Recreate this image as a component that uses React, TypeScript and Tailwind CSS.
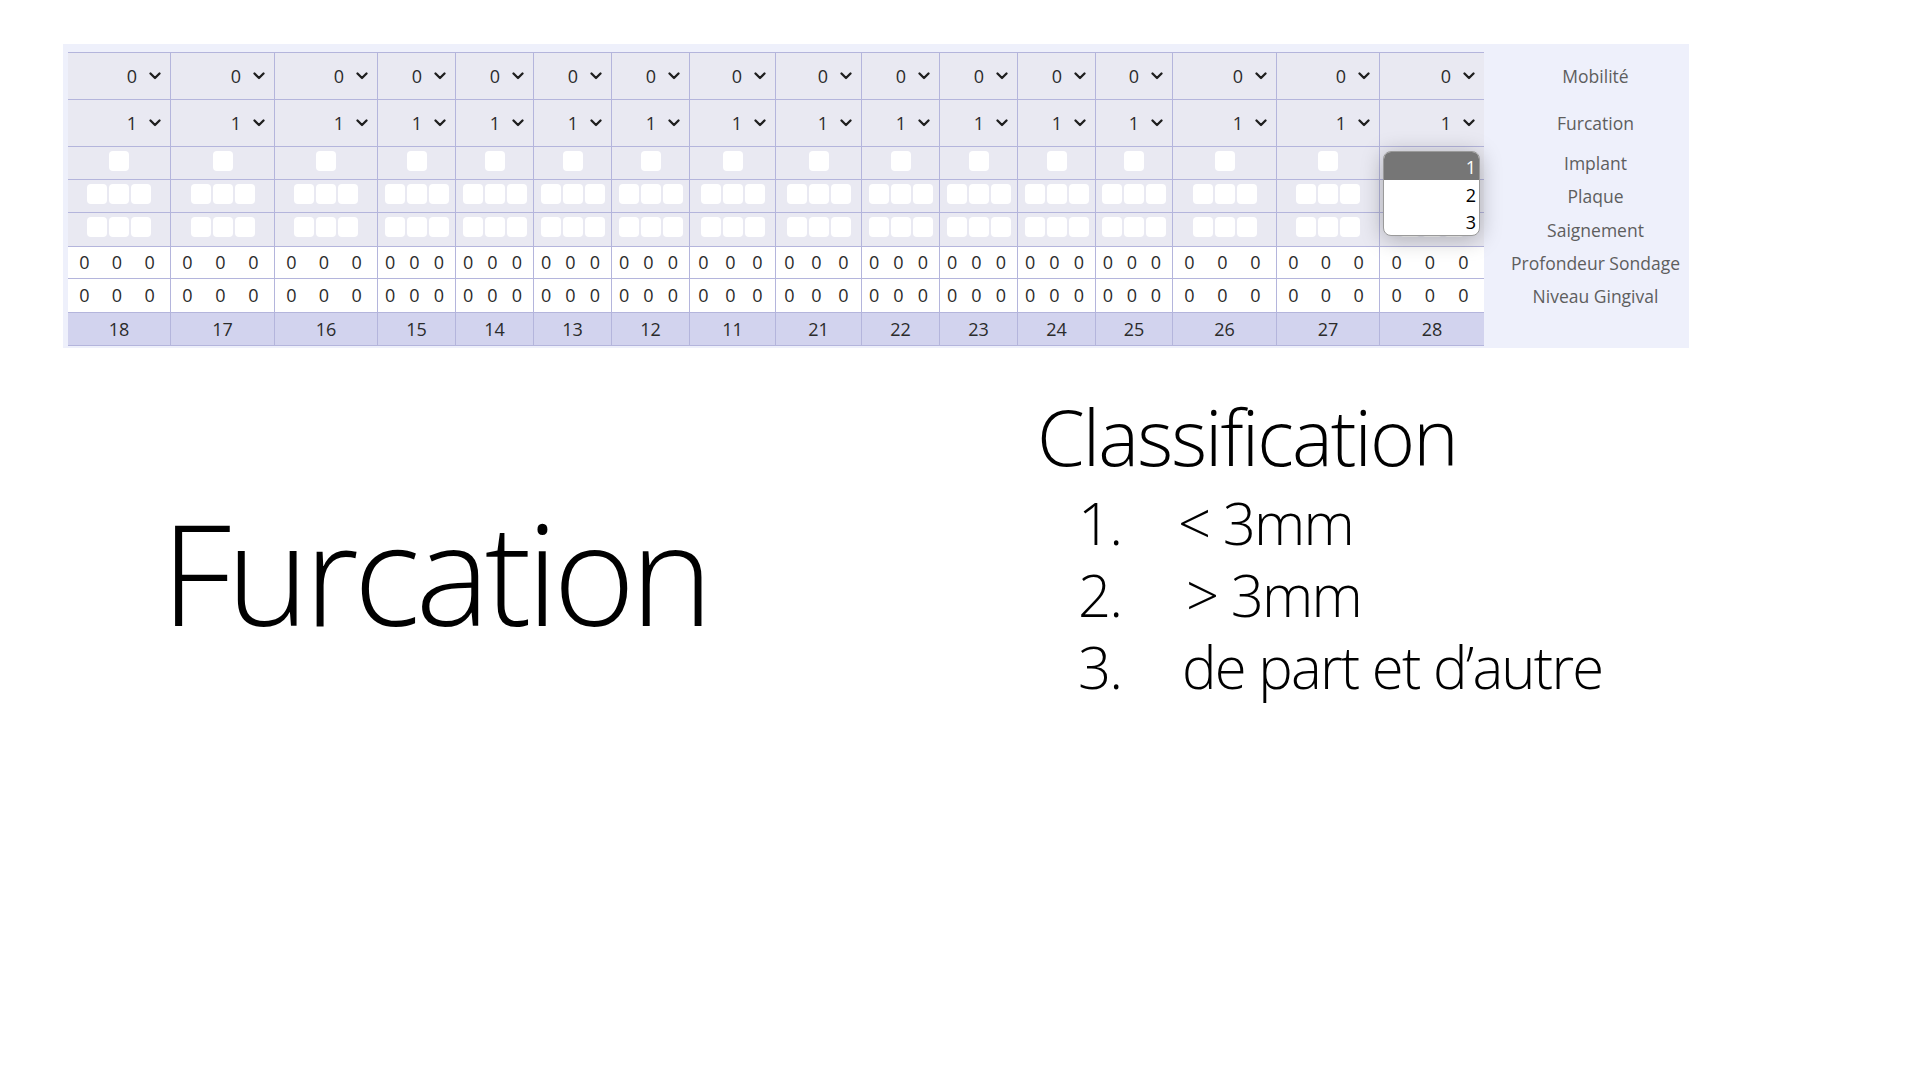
const teeth = [18, 17, 16, 15, 14, 13, 12, 11, 21, 22, 23, 24, 25, 26, 27, 28];
const grid =
  "grid grid-cols-[103px_104px_103px_78px_78px_78px_78px_86px_86px_78px_78px_78px_77px_104px_103px_104px_205px]";

function Chevron() {
  return (
    <svg width="12" height="8" viewBox="0 0 12 8" fill="none">
      <path d="M1.5 1.5 6 6l4.5-4.5" stroke="#1f1f1f" strokeWidth="2.3" strokeLinecap="round" strokeLinejoin="round" />
    </svg>
  );
}

function cellBorder(i: number) {
  return i === 15 ? "border-b border-[#b4b5dc]" : "border-b border-r border-[#b4b5dc]";
}

function Label({ children }: { children: string }) {
  return (
    <div className="flex items-center justify-center pl-[18px] text-[17.5px] text-[#5e5e5e]">{children}</div>
  );
}

function Box() {
  return <div className="h-[20px] w-[20px] rounded-[4px] bg-white" />;
}

function Dropdown() {
  return (
    <div className="absolute left-[3px] top-[calc(100%+5px)] z-10 h-[85px] w-[97px] overflow-hidden rounded-[8px] border border-[#9a9a9a] bg-white shadow-[0_3px_22px_rgba(0,0,0,0.28)]">
      <div className="h-[28px] bg-[#767676] pr-[3px] text-right text-[18px] leading-[30px] text-white">1</div>
      <div className="h-[28px] pr-[3px] text-right text-[18px] leading-[30px] text-black">2</div>
      <div className="h-[28px] pr-[3px] text-right text-[18px] leading-[28px] text-black">3</div>
    </div>
  );
}

function SelectRow({ value, first, label, open }: { value: string; first?: boolean; label: string; open?: boolean }) {
  return (
    <div className={grid}>
      {teeth.map((t, i) => (
        <div
          key={t}
          className={`relative flex items-center justify-end gap-[12px] bg-[#e9e9f2] pr-[9px] text-[18px] text-[#2b2b2b] ${cellBorder(i)} ${
            first ? "h-[48px] border-t" : "h-[47px]"
          }`}
        >
          <span>{value}</span>
          <Chevron />
          {open && i === 15 && <Dropdown />}
        </div>
      ))}
      <Label>{label}</Label>
    </div>
  );
}

function BoxRow({ count, label, h }: { count: number; label: string; h: string }) {
  return (
    <div className={grid}>
      {teeth.map((t, i) => (
        <div key={t} className={`flex justify-center gap-[2px] bg-[#e9e9f2] pt-[4px] ${h} ${cellBorder(i)}`}>
          {Array.from({ length: count }).map((_, k) => (
            <Box key={k} />
          ))}
        </div>
      ))}
      <Label>{label}</Label>
    </div>
  );
}

function ZeroRow({ label, h }: { label: string; h: string }) {
  return (
    <div className={grid}>
      {teeth.map((t, i) => (
        <div key={t} className={`grid grid-cols-3 items-center bg-white pr-[4px] text-[18px] text-[#2b2b2b] ${h} ${cellBorder(i)}`}>
          <span className="text-center">0</span>
          <span className="text-center">0</span>
          <span className="text-center">0</span>
        </div>
      ))}
      <Label>{label}</Label>
    </div>
  );
}

export default function App() {
  return (
    <div className="min-h-screen bg-white font-['Open_Sans',sans-serif]">
      <div className="ml-[63px] mt-[44px] w-[1626px] bg-[#eef0fb] pb-[2px] pl-[5px] pt-[8px]">
        <SelectRow value="0" first label="Mobilité" />
        <SelectRow value="1" label="Furcation" open />
        <BoxRow count={1} label="Implant" h="h-[33px]" />
        <BoxRow count={3} label="Plaque" h="h-[33px]" />
        <BoxRow count={3} label="Saignement" h="h-[34px]" />
        <ZeroRow label="Profondeur Sondage" h="h-[32px]" />
        <ZeroRow label="Niveau Gingival" h="h-[34px]" />
        <div className={grid}>
          {teeth.map((t, i) => (
            <div key={t} className={`flex h-[33px] items-center justify-center bg-[#d2d3ee] text-[18px] text-[#2b2b2b] ${cellBorder(i)}`}>
              {t}
            </div>
          ))}
          <div />
        </div>
      </div>

      <div className="mt-[50px] flex items-start">
        <div className="w-[1037px] shrink-0 pl-[161px] pt-[104px] text-[140px] font-light leading-none tracking-[-0.035em] text-black">
          Furcation
        </div>
        <div className="font-light text-black">
          <div className="text-[77px] leading-none tracking-[-0.025em]">Classification</div>
          <ol className="mt-[12px] pl-[41px] text-[58px] leading-[72px] tracking-[-0.03em]">
            <li className="flex">
              <span className="w-[100px]">1.</span>
              <span>&lt; 3mm</span>
            </li>
            <li className="flex">
              <span className="w-[100px]">2.</span>
              <span className="pl-[8px]">&gt; 3mm</span>
            </li>
            <li className="flex">
              <span className="w-[100px]">3.</span>
              <span className="pl-[4px]">de part et d’autre</span>
            </li>
          </ol>
        </div>
      </div>
    </div>
  );
}
